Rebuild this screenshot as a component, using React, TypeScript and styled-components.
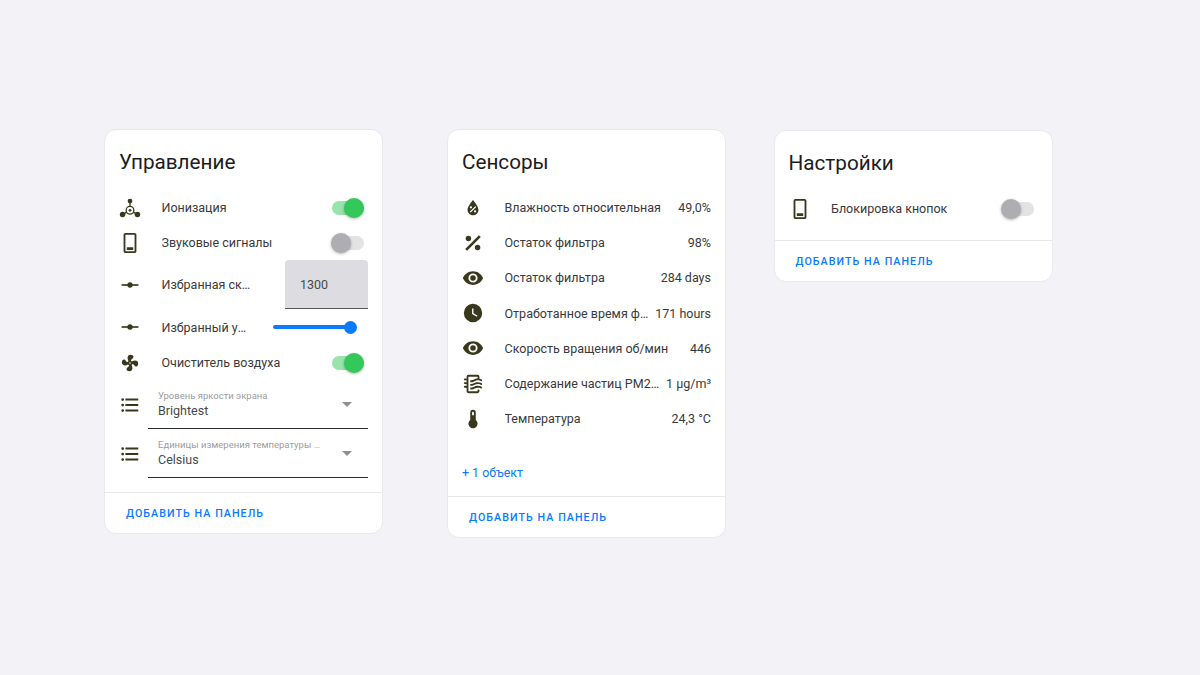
import * as React from "react";
import styled, { createGlobalStyle } from "styled-components";

const GlobalStyle = createGlobalStyle`
  html, body {
    margin: 0;
    padding: 0;
    background: #f2f2f7;
    font-family: Roboto, "Noto Sans", sans-serif;
  }
`;

const Page = styled.div`
  display: flex;
  align-items: flex-start;
  width: 1200px;
  height: 675px;
  box-sizing: border-box;
  padding: 129px 0 0 104px;
`;

const Card = styled.section<{ $gap?: number; $top?: number }>`
  width: 279px;
  box-sizing: border-box;
  flex: none;
  margin-left: ${(p) => p.$gap ?? 0}px;
  margin-top: ${(p) => p.$top ?? 0}px;
  background: #fff;
  border: 1px solid #e8e8ed;
  border-radius: 12px;
`;

const Title = styled.h2`
  margin: 0;
  height: 60px;
  padding: 0 14px;
  font-size: 20.7px;
  font-weight: 400;
  line-height: 64px;
  color: #1c1c1e;
`;

const Rows = styled.div<{ $bottom: number }>`
  display: flex;
  flex-direction: column;
  padding: 0 14px ${(p) => p.$bottom}px 14px;
`;

const Row = styled.div<{ $height?: number }>`
  display: flex;
  align-items: center;
  height: ${(p) => p.$height ?? 35}px;
  flex: none;
`;

const IconBox = styled.svg<{ $gap?: number }>`
  width: 22px;
  height: 22px;
  flex: none;
  margin-right: ${(p) => p.$gap ?? 20.5}px;
  fill: #38381c;
`;

const Name = styled.span`
  flex: 1;
  min-width: 0;
  font-size: 12.5px;
  color: #3a3a3c;
  white-space: nowrap;
  overflow: hidden;
  text-overflow: ellipsis;
`;

const Value = styled.span<{ $gap?: number }>`
  flex: none;
  margin-left: ${(p) => p.$gap ?? 7}px;
  font-size: 12.5px;
  color: #3a3a3c;
`;

const SwitchBox = styled.div`
  position: relative;
  width: 32px;
  height: 14px;
  flex: none;
  margin: 0 4px 0 20px;
`;

const SwitchTrack = styled.div<{ $on: boolean }>`
  width: 100%;
  height: 100%;
  border-radius: 7px;
  background: ${(p) => (p.$on ? "#34c759" : "#aeaeb2")};
  opacity: ${(p) => (p.$on ? 0.5 : 0.35)};
`;

const SwitchThumb = styled.div<{ $on: boolean }>`
  position: absolute;
  top: -3px;
  left: ${(p) => (p.$on ? 12 : -1)}px;
  width: 20px;
  height: 20px;
  border-radius: 50%;
  background: ${(p) => (p.$on ? "#34c759" : "#aeaeb2")};
  box-shadow: 0 1px 3px rgba(0, 0, 0, 0.3);
`;

const NumberField = styled.div`
  flex: none;
  box-sizing: border-box;
  width: 83px;
  height: 49px;
  margin-left: 34px;
  padding-left: 15px;
  background: #dddde1;
  border-bottom: 1px solid #55555a;
  border-radius: 4px 4px 0 0;
  font-size: 12.5px;
  line-height: 49px;
  color: #48484a;
`;

const Slider = styled.div`
  flex: none;
  display: flex;
  align-items: center;
  width: 84px;
  margin: 0 11px 0 22px;
`;

const SliderFill = styled.div`
  flex: 1;
  height: 4px;
  margin-right: -6px;
  border-radius: 2px;
  background: #0a7aff;
`;

const SliderThumb = styled.div`
  flex: none;
  width: 13px;
  height: 13px;
  border-radius: 50%;
  background: #0a7aff;
`;

const SelectBox = styled.div`
  flex: 1;
  min-width: 0;
  box-sizing: border-box;
  height: 49px;
  display: flex;
  align-items: center;
  padding: 0 16px 0 10px;
  border-bottom: 1px solid #2c2c2e;
`;

const SelectText = styled.div`
  flex: 1;
  min-width: 0;
  padding-top: 1px;
`;

const SelectLabel = styled.div`
  font-size: 9.5px;
  line-height: 12px;
  color: #9c9ca0;
  white-space: nowrap;
  overflow: hidden;
  text-overflow: ellipsis;
`;

const SelectValue = styled.div`
  margin-top: 1px;
  font-size: 12.5px;
  line-height: 16px;
  color: #48484a;
`;

const Caret = styled.div`
  flex: none;
  width: 0;
  height: 0;
  margin: 0 0 0 20px;
  border-left: 5px solid transparent;
  border-right: 5px solid transparent;
  border-top: 5px solid #8e8e93;
`;

const MoreLink = styled.div`
  height: 60px;
  box-sizing: border-box;
  padding: 28px 14px 0;
  font-size: 12.4px;
  line-height: 18px;
  color: #0a7aff;
`;

const Actions = styled.div`
  height: 41px;
  border-top: 1px solid #e8e8ed;
  box-sizing: border-box;
  padding-left: 21px;
  font-size: 10.7px;
  font-weight: 500;
  line-height: 41px;
  letter-spacing: 1.05px;
  color: #0a7aff;
  text-transform: uppercase;
`;

const paths = {
  eye: "M12,9A3,3 0 0,0 9,12A3,3 0 0,0 12,15A3,3 0 0,0 15,12A3,3 0 0,0 12,9M12,17A5,5 0 0,1 7,12A5,5 0 0,1 12,7A5,5 0 0,1 17,12A5,5 0 0,1 12,17M12,4.5C7,4.5 2.73,7.61 1,12C2.73,16.39 7,19.5 12,19.5C17,19.5 21.27,16.39 23,12C21.27,7.61 17,4.5 12,4.5Z",
  clock: "M12,2A10,10 0 0,0 2,12A10,10 0 0,0 12,22A10,10 0 0,0 22,12A10,10 0 0,0 12,2M16.2,16.2L11,13V7H12.5V12.2L17,14.9L16.2,16.2Z",
  percent: "M18.5,3.5L3.5,18.5L5.5,20.5L20.5,5.5M7,4A3,3 0 0,0 4,7A3,3 0 0,0 7,10A3,3 0 0,0 10,7A3,3 0 0,0 7,4M17,14A3,3 0 0,0 14,17A3,3 0 0,0 17,20A3,3 0 0,0 20,17A3,3 0 0,0 17,14Z",
  list: "M7,5H21V7H7V5M7,13V11H21V13H7M4,4.5A1.5,1.5 0 0,1 5.5,6A1.5,1.5 0 0,1 4,7.5A1.5,1.5 0 0,1 2.5,6A1.5,1.5 0 0,1 4,4.5M4,10.5A1.5,1.5 0 0,1 5.5,12A1.5,1.5 0 0,1 4,13.5A1.5,1.5 0 0,1 2.5,12A1.5,1.5 0 0,1 4,10.5M7,19V17H21V19H7M4,16.5A1.5,1.5 0 0,1 5.5,18A1.5,1.5 0 0,1 4,19.5A1.5,1.5 0 0,1 2.5,18A1.5,1.5 0 0,1 4,16.5Z",
  fan: "M12,11A1,1 0 0,0 11,12A1,1 0 0,0 12,13A1,1 0 0,0 13,12A1,1 0 0,0 12,11M12.5,2C17,2 17.11,5.57 14.75,6.75C13.76,7.24 13.32,8.29 13.13,9.22C13.61,9.42 14.03,9.73 14.35,10.13C18.05,8.13 22.03,8.92 22.03,12.5C22.03,17 18.46,17.1 17.28,14.73C16.78,13.74 15.72,13.3 14.79,13.11C14.59,13.59 14.28,14 13.88,14.34C15.87,18.03 15.08,22 11.5,22C7,22 6.91,18.42 9.27,17.24C10.25,16.75 10.69,15.71 10.89,14.79C10.4,14.59 9.97,14.27 9.65,13.87C5.96,15.85 2,15.07 2,11.5C2,7 5.56,6.89 6.74,9.26C7.24,10.25 8.29,10.68 9.22,10.87C9.41,10.39 9.73,9.97 10.14,9.65C8.15,5.96 8.94,2 12.5,2Z",
  thermometer: "M15 13V5A3 3 0 0 0 9 5V13A5 5 0 1 0 15 13M12 4A1 1 0 0 1 13 5V8H11V5A1 1 0 0 1 12 4Z",
  water: "M12,3.25C12,3.25 6,10 6,14C6,17.32 8.69,20 12,20A6,6 0 0,0 18,14C18,10 12,3.25 12,3.25M14.47,9.97L15.53,11.03L9.53,17.03L8.47,15.97M9.75,10A1.25,1.25 0 0,1 11,11.25A1.25,1.25 0 0,1 9.75,12.5A1.25,1.25 0 0,1 8.5,11.25A1.25,1.25 0 0,1 9.75,10M14.25,14.5A1.25,1.25 0 0,1 15.5,15.75A1.25,1.25 0 0,1 14.25,17A1.25,1.25 0 0,1 13,15.75A1.25,1.25 0 0,1 14.25,14.5Z",
  filter: "M19,18.31V20A2,2 0 0,1 17,22H7A2,2 0 0,1 5,20V16.3C4.54,16.12 3.95,16 3,16A1,1 0 0,1 2,15A1,1 0 0,1 3,14C3.82,14 4.47,14.08 5,14.21V12.3C4.54,12.12 3.95,12 3,12A1,1 0 0,1 2,11A1,1 0 0,1 3,10C3.82,10 4.47,10.08 5,10.21V8.3C4.54,8.12 3.95,8 3,8A1,1 0 0,1 2,7A1,1 0 0,1 3,6C3.82,6 4.47,6.08 5,6.21V4A2,2 0 0,1 7,2H17A2,2 0 0,1 19,4V6.16C20.78,6.47 21.54,7.13 21.71,7.29C22.1,7.68 22.1,8.32 21.71,8.71C21.32,9.1 20.8,9.09 20.29,8.71V8.71C20.29,8.71 19.25,8 17,8C15.74,8 14.91,8.41 13.95,8.9C12.91,9.41 11.74,10 10,10C9.64,10 9.31,10 9,9.96V7.95C9.3,8 9.63,8 10,8C11.26,8 12.09,7.59 13.05,7.11C14.09,6.59 15.27,6 17,6V4H7V20H17V18C18.5,18 18.97,18.29 19,18.31M17,10C15.27,10 14.09,10.59 13.05,11.11C12.09,11.59 11.26,12 10,12C9.63,12 9.3,12 9,11.95V13.96C9.31,14 9.64,14 10,14C11.74,14 12.91,13.41 13.95,12.9C14.91,12.41 15.74,12 17,12C19.25,12 20.29,12.71 20.29,12.71V12.71C20.8,13.09 21.32,13.1 21.71,12.71C22.1,12.32 22.1,11.68 21.71,11.29C21.5,11.08 20.25,10 17,10M17,14C15.27,14 14.09,14.59 13.05,15.11C12.09,15.59 11.26,16 10,16C9.63,16 9.3,16 9,15.95V17.96C9.31,18 9.64,18 10,18C11.74,18 12.91,17.41 13.95,16.9C14.91,16.42 15.74,16 17,16C19.25,16 20.29,16.71 20.29,16.71V16.71C20.8,17.09 21.32,17.1 21.71,16.71C22.1,16.32 22.1,15.68 21.71,15.29C21.5,15.08 20.25,14 17,14Z",
  phone: "M17,1H7C5.9,1 5,1.9 5,3V21C5,22.1 5.9,23 7,23H17C18.1,23 19,22.1 19,21V3C19,1.9 18.1,1 17,1M17,21H7V3H17V21M8.5,16.5H15.5V19.5H8.5V16.5Z",
};

type IconName = keyof typeof paths;

function Icon({ name, gap, view }: { name: IconName; gap?: number; view?: string }) {
  return (
    <IconBox viewBox={view ?? "0 0 24 24"} $gap={gap}>
      <path fillRule="evenodd" d={paths[name]} />
    </IconBox>
  );
}

function IonIcon() {
  return (
    <IconBox viewBox="0 0 24 24">
      <circle cx="12" cy="4.4" r="2.6" />
      <circle cx="3.9" cy="19" r="3" />
      <circle cx="20.1" cy="19" r="3" />
      <circle cx="12" cy="14.5" r="1.5" />
      <circle cx="12" cy="14.5" r="4.2" fill="none" stroke="#38381c" strokeWidth="1.4" />
      <path d="M12 5V10.5M4 19L8.4 16.5M20 19L15.6 16.5" fill="none" stroke="#38381c" strokeWidth="1.4" />
    </IconBox>
  );
}

function SliderIcon() {
  return (
    <IconBox viewBox="0 0 24 24">
      <rect x="2.8" y="11.1" width="18.4" height="1.8" />
      <circle cx="12" cy="12" r="2.9" />
    </IconBox>
  );
}

function Toggle({ on }: { on: boolean }) {
  return (
    <SwitchBox>
      <SwitchTrack $on={on} />
      <SwitchThumb $on={on} />
    </SwitchBox>
  );
}

function SelectRow({ label, value }: { label: string; value: string }) {
  return (
    <Row $height={49}>
      <Icon name="list" gap={7} />
      <SelectBox>
        <SelectText>
          <SelectLabel>{label}</SelectLabel>
          <SelectValue>{value}</SelectValue>
        </SelectText>
        <Caret />
      </SelectBox>
    </Row>
  );
}

const sensors: { icon: IconName; name: string; value: string; gap?: number }[] = [
  { icon: "water", name: "Влажность относительная", value: "49,0%" },
  { icon: "percent", name: "Остаток фильтра", value: "98%" },
  { icon: "eye", name: "Остаток фильтра", value: "284 days" },
  { icon: "clock", name: "Отработанное время фильтра", value: "171 hours", gap: 4 },
  { icon: "eye", name: "Скорость вращения об/мин", value: "446" },
  { icon: "filter", name: "Содержание частиц PM2.5", value: "1 µg/m³" },
  { icon: "thermometer", name: "Температура", value: "24,3 °C" },
];

export default function App() {
  return (
    <Page>
      <GlobalStyle />
      <Card>
        <Title>Управление</Title>
        <Rows $bottom={14}>
          <Row>
            <IonIcon />
            <Name>Ионизация</Name>
            <Toggle on />
          </Row>
          <Row>
            <Icon name="phone" />
            <Name>Звуковые сигналы</Name>
            <Toggle on={false} />
          </Row>
          <Row $height={49}>
            <SliderIcon />
            <Name>Избранная скорость</Name>
            <NumberField>1300</NumberField>
          </Row>
          <Row $height={36}>
            <SliderIcon />
            <Name>Избранный уровень</Name>
            <Slider>
              <SliderFill />
              <SliderThumb />
            </Slider>
          </Row>
          <Row>
            <Icon name="fan" view="-1.5 -1.5 27 27" />
            <Name>Очиститель воздуха</Name>
            <Toggle on />
          </Row>
          <SelectRow label="Уровень яркости экрана" value="Brightest" />
          <SelectRow label="Единицы измерения температуры воздуха" value="Celsius" />
        </Rows>
        <Actions>Добавить на панель</Actions>
      </Card>

      <Card $gap={64}>
        <Title>Сенсоры</Title>
        <Rows $bottom={0}>
          {sensors.map((s, i) => (
            <Row key={i} $height={35.2}>
              <Icon name={s.icon} />
              <Name>{s.name}</Name>
              <Value $gap={s.gap}>{s.value}</Value>
            </Row>
          ))}
        </Rows>
        <MoreLink>+ 1 объект</MoreLink>
        <Actions>Добавить на панель</Actions>
      </Card>

      <Card $gap={47.5} $top={1}>
        <Title>Настройки</Title>
        <Rows $bottom={14}>
          <Row>
            <Icon name="phone" />
            <Name>Блокировка кнопок</Name>
            <Toggle on={false} />
          </Row>
        </Rows>
        <Actions>Добавить на панель</Actions>
      </Card>
    </Page>
  );
}
